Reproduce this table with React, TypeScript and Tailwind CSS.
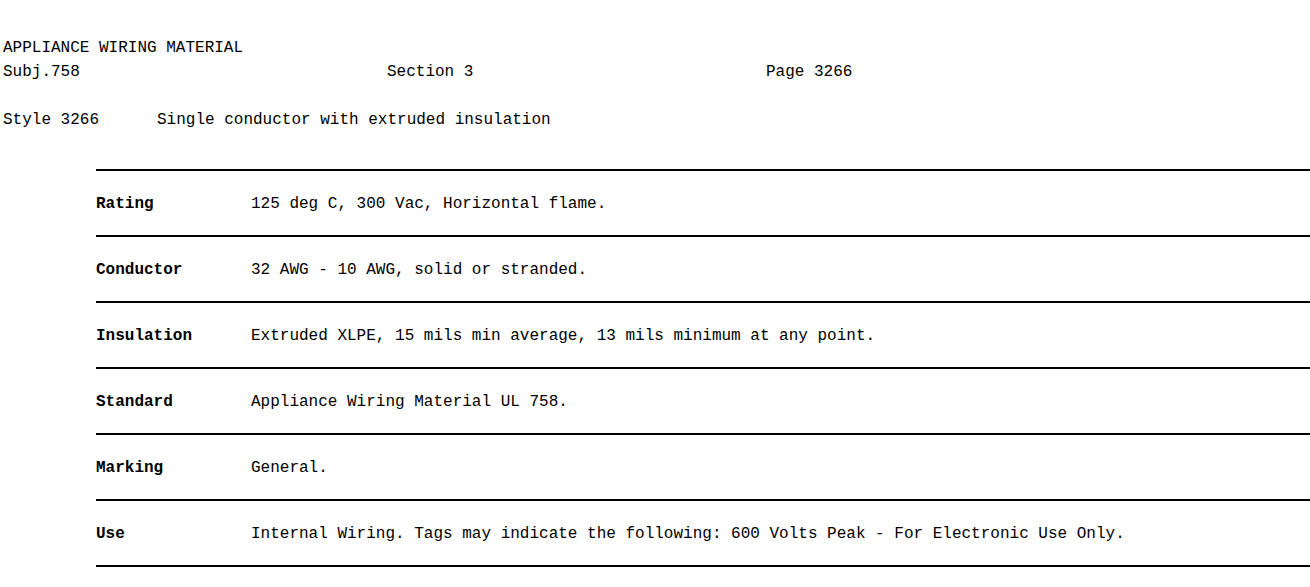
const rows = [
  { label: 'Rating', value: '125 deg C, 300 Vac, Horizontal flame.' },
  { label: 'Conductor', value: '32 AWG - 10 AWG, solid or stranded.' },
  { label: 'Insulation', value: 'Extruded XLPE, 15 mils min average, 13 mils minimum at any point.' },
  { label: 'Standard', value: 'Appliance Wiring Material UL 758.' },
  { label: 'Marking', value: 'General.' },
  { label: 'Use', value: 'Internal Wiring. Tags may indicate the following: 600 Volts Peak - For Electronic Use Only.' },
];

export default function App() {
  return (
    <div className="min-h-[587px] w-[1310px] overflow-hidden bg-white pt-[36px] pl-[3px] font-['Liberation_Mono',monospace] text-[16px] leading-[24px] text-black">
      <div className="whitespace-pre">APPLIANCE WIRING MATERIAL</div>
      <div className="flex whitespace-pre">
        <span className="w-[384px]">Subj.758</span>
        <span className="w-[379px]">Section 3</span>
        <span>Page 3266</span>
      </div>
      <div className="h-[24px]" />
      <div className="flex whitespace-pre">
        <span className="w-[154px]">Style 3266</span>
        <span>Single conductor with extruded insulation</span>
      </div>

      <div className="mt-[37px] ml-[93px] border-t-2 border-black">
        {rows.map((r) => (
          <div key={r.label} className="flex h-[66px] items-center border-b-2 border-black pt-[2px] whitespace-pre">
            <span className="w-[155px] font-bold">{r.label}</span>
            <span>{r.value}</span>
          </div>
        ))}
      </div>
    </div>
  );
}
